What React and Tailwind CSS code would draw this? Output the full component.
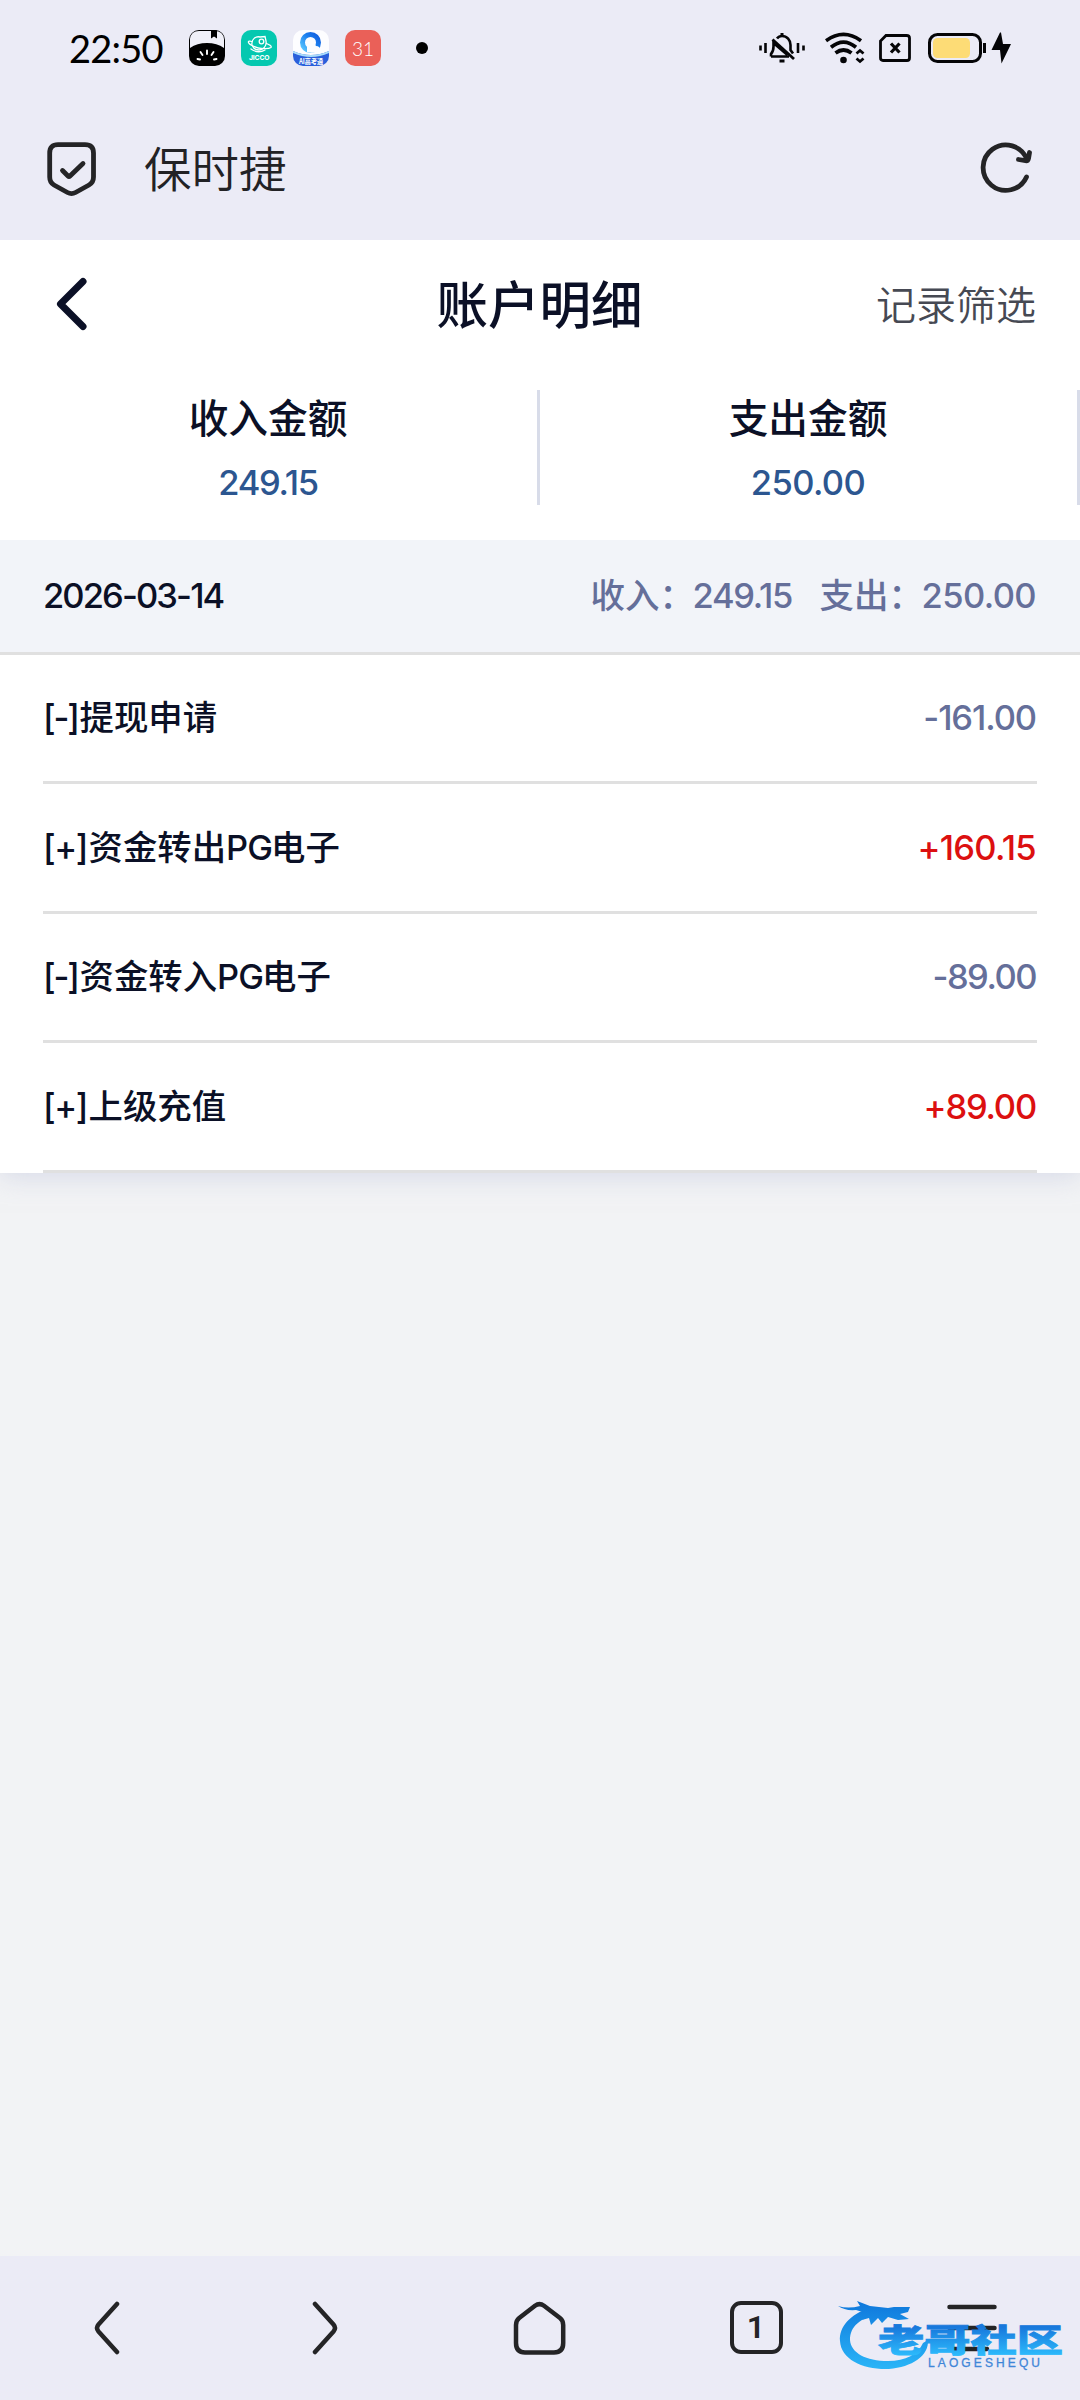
import React from "react";

const records = [
  { sign: "[-]", before: "提现申请", amount: "-161.00", income: false, track: "tracking-[-1.1px]", height: "h-[129px]" },
  { sign: "[+]", before: "资金转出", game: "PG", after: "电子", amount: "+160.15", income: true, track: "tracking-[-0.7px]", height: "h-[130px]" },
  { sign: "[-]", before: "资金转入", game: "PG", after: "电子", amount: "-89.00", income: false, track: "tracking-[-1.5px]", height: "h-[129px]" },
  { sign: "[+]", before: "上级充值", amount: "+89.00", income: true, track: "tracking-[-1.2px]", height: "h-[130px]" },
];

function BookIcon() {
  return (
    <svg width="36" height="36" viewBox="0 0 36 36">
      <clipPath id="book-clip"><rect width="36" height="36" rx="10" /></clipPath>
      <g clipPath="url(#book-clip)">
        <rect width="36" height="36" fill="#000" />
        <path d="M1 18V9Q2 1 10 1H26Q34 1 35 9V18Q28 13 18 13Q8 13 1 18Z" fill="#f0f0f8" />
        <path d="M22 0H28V8.500L25 6.500L22 8.500Z" fill="#000" />
        <g stroke="#fff" strokeWidth="1.900" strokeLinecap="round">
          <path d="M18 20.500V24M11.500 22L13.500 25M24.500 22L22.500 25M8.500 29L11 29.500M27.500 29L25 29.500" />
        </g>
      </g>
    </svg>
  );
}

function JiccoIcon() {
  return (
    <svg width="36" height="36" viewBox="0 0 36 36">
      <rect width="36" height="36" rx="10" fill="#05c8b0" />
      <g fill="none" stroke="#fff" strokeWidth="1.300" strokeLinecap="round">
        <path d="M11 15C10 9 15 6 19 7L24 6.500L25 11C26 16 22 20 18 20C15 20 12.500 18.500 11.500 16" />
        <path d="M11 11.500C6 10 6 13 12 16C18 19 27 19.500 30 17.500C31 16 28 14.500 25.500 13.500" />
        <circle cx="20.500" cy="11.500" r="2.300" />
        <path d="M10 19Q17 24 24 20" />
      </g>
      <text x="8" y="30.300" textLength="20.500" fontFamily="Inter" fontWeight="700" fontSize="6.800" fill="#fff">JICCO</text>
    </svg>
  );
}

function BrowserIcon() {
  return (
    <svg width="36" height="36" viewBox="0 0 36 36">
      <defs>
        <clipPath id="browser-clip"><rect width="36" height="36" rx="10" /></clipPath>
        <linearGradient id="browser-ring" x1="0" y1="1" x2="1" y2="0">
          <stop offset="0" stopColor="#5cc8ff" />
          <stop offset="0.600" stopColor="#1c7fee" />
          <stop offset="1" stopColor="#1560df" />
        </linearGradient>
      </defs>
      <g clipPath="url(#browser-clip)">
        <rect width="36" height="36" fill="#fdfdff" />
        <path d="M0 21Q18 29 36 21V36H0Z" fill="#2a5fdb" />
        <path d="M0 21Q18 29 36 21V23Q18 31 0 23Z" fill="#a9dcfa" />
        <circle cx="17.500" cy="12.500" r="8" fill="none" stroke="url(#browser-ring)" strokeWidth="5" />
        <path d="M14 17Q15 12 19 12.500Q22 13 23 16Q27 16 27 20Q22 24 14 22Z" fill="#fdfdff" />
        <text x="6" y="33.800" textLength="24" lengthAdjust="spacingAndGlyphs" fontFamily="'Noto Sans CJK SC'" fontWeight="700" fontSize="7" fill="#fff">AI高考通</text>
      </g>
    </svg>
  );
}

function StatusBar() {
  return (
    <div className="flex h-[96px] items-center pl-[69px] pr-[68px]">
      <span className="w-[93px] whitespace-nowrap font-['Lato'] text-[38px] leading-[40px] tracking-[-0.8px] text-black">22:50</span>
      <div className="ml-[27px] flex items-center gap-4">
        <BookIcon />
        <JiccoIcon />
        <BrowserIcon />
        <span className="flex size-9 items-center justify-center rounded-[10px] bg-[#ea6058] font-['Lato'] text-[19px] font-light leading-none text-white">31</span>
      </div>
      <span className="ml-[35px] size-3 rounded-full bg-black" />
      <div className="ml-auto flex items-center">
        <svg width="46" height="32" viewBox="0 0 46 32" fill="none" stroke="#050507">
          <path d="M1.500 13.500V18.500M6.500 11V21M39 11V21M44.500 13.500V18.500" strokeWidth="2.600" />
          <path d="M12 24.500H30M12 24.500V22C14 20 14.500 18 14.500 14.500V11L28.500 23M18 6.500C19.500 4.500 21 4 23 4C28 4 31.500 8 31.500 13V18L34 21.500" strokeWidth="2.600" />
          <path d="M13.500 7.500L35 27" strokeWidth="2.800" />
          <path d="M23 1V4M20.500 29H25.500" strokeWidth="3" />
        </svg>
        <svg className="ml-[20px]" width="40" height="32" viewBox="0 0 40 32" fill="none" stroke="#050507">
          <path d="M1 8.700Q18.500 -4 36 8.700M6 15.300Q18.500 5 31 15.300M10.500 21Q18.500 15 26.500 21" strokeWidth="3.700" />
          <circle cx="18.500" cy="28" r="3.300" fill="#050507" stroke="none" />
          <path d="M31.500 21.500L35 18.500L38.500 21.500M31.500 26.500L35 29.500L38.500 26.500" strokeWidth="2.800" />
        </svg>
        <svg className="ml-[14px]" width="32" height="30" viewBox="0 0 32 30" fill="none" stroke="#050507" strokeWidth="2.800">
          <path d="M7 2.500H27.500Q30.500 2.500 30.500 5V25Q30.500 27.500 28 27.500H4Q1.500 27.500 1.500 25V8Z" />
          <path d="M12 10.500L20.500 19.500M20.500 10.500L12 19.500" strokeWidth="3.200" />
        </svg>
        <svg className="ml-[17px]" width="59" height="32" viewBox="0 0 59 32">
          <rect x="1.500" y="2.500" width="51" height="27" rx="8" fill="none" stroke="#050507" strokeWidth="3" />
          <rect x="5" y="6" width="37" height="20" rx="4.500" fill="#fddc76" />
          <path d="M56.500 11V21" stroke="#050507" strokeWidth="3" />
        </svg>
        <svg className="ml-[4px]" width="21" height="32" viewBox="0 0 21 32">
          <path d="M9 0.500L0.500 18H9L10.500 31.500L20 12H12L10 0.500Z" fill="#050507" />
        </svg>
      </div>
    </div>
  );
}

function AddressBar() {
  return (
    <div className="flex h-[144px] items-start pl-[46px] pr-[46px] pt-[45px]">
      <svg width="50" height="56" viewBox="0 0 50 56" fill="none" stroke="#242426" strokeWidth="4.800" strokeLinecap="round" strokeLinejoin="round">
        <path d="M12 3.700H39Q47.500 3.700 47.500 12V36Q47.500 41.500 43 44L29.500 51.500Q25.500 53.700 21.500 51.500L8 44Q3.700 41.500 3.700 36V12Q3.700 3.700 12 3.700Z" />
        <path d="M16.500 29.500L22 35Q23 36 24 35L37 22.500" />
      </svg>
      <span className="ml-[48px] mt-px text-[47.500px] font-[350] leading-[56px] text-[#222225]">保时捷</span>
      <svg className="ml-auto" width="54" height="54" viewBox="0 0 54 54" fill="none" stroke="#242426" strokeWidth="4.800" strokeLinecap="round" strokeLinejoin="round">
        <path d="M46.500 36A22.700 22.700 0 1 1 47 18.500" />
        <path d="M38.500 18.500L45.500 19.700Q48 20 48.500 17.500L49.500 11.500" />
      </svg>
    </div>
  );
}

function Total({ label, value, track }) {
  return (
    <div className="flex h-[115px] w-1/2 flex-col items-center border-r-[3px] border-[#d8dce9] pr-px">
      <span className="mt-1 text-[39.700px] font-medium leading-[50px] text-[#0b1026]">{label}</span>
      <span className={`mt-[19px] text-[34.500px] font-medium leading-10 text-[#2c5690] ${track}`}>{value}</span>
    </div>
  );
}

function Record({ item }) {
  return (
    <div className={`flex items-center justify-between border-b-[3px] border-[#e0e0e0] pr-px ${item.height}`}>
      <div className="flex whitespace-nowrap text-[34.400px] font-medium leading-10 text-[#0b1026]">
        <span className={item.sign === "[+]" ? "w-[45.500px] tracking-[-1.500px]" : "w-[36.500px] tracking-[-2.200px]"}>{item.sign}</span>
        <span>{item.before}</span>
        {item.game && <span className="w-[45px] tracking-[-1px]">{item.game}</span>}
        {item.after && <span>{item.after}</span>}
      </div>
      <span className={`text-[34.500px] font-medium leading-10 ${item.track} ${item.income ? "text-[#dc1010]" : "text-[#656f9a]"}`}>{item.amount}</span>
    </div>
  );
}

function Watermark() {
  return (
    <svg className="absolute bottom-[24px] right-[16px]" width="228" height="82" viewBox="0 0 228 82">
      <defs>
        <linearGradient id="wm" gradientUnits="userSpaceOnUse" x1="0" y1="8" x2="0" y2="76">
          <stop offset="0" stopColor="#0f78dc" />
          <stop offset="1" stopColor="#2ab6f8" />
        </linearGradient>
        <linearGradient id="wm-text" x1="0" y1="0" x2="0" y2="1">
          <stop offset="0.250" stopColor="#1878dc" />
          <stop offset="0.850" stopColor="#2cb9fb" />
        </linearGradient>
      </defs>
      <g fill="url(#wm)">
        <path d="M34 14C14 20 3 33 4 47C5 66 28 76 53 75C76 73 93 62 92 46L87 49C82 60 70 67 52 67C30 67 15 59 14 46C14 32 25 24 40 21Z" />
        <path d="M2 12Q12 15 24 12L21 7L34 12L52 14L58 13L74 13L72 18L64 20L73 25L62 26L52 23L46 29L42 24L35 31L33 24L26 26L30 19L20 16Q9 17 2 12Z" />
      </g>
      <text transform="translate(42 58) scale(1 0.770)" textLength="185" lengthAdjust="spacingAndGlyphs" fontFamily="'Noto Sans CJK SC'" fontWeight="900" fontSize="41" y="0" fill="url(#wm-text)" stroke="url(#wm-text)" strokeWidth="1">老哥社区</text>
      <text x="92" y="72.500" textLength="112" fontFamily="'Liberation Sans'" fontSize="12" fill="#3f86d8" stroke="#3f86d8" strokeWidth="0.300">LAOGESHEQU</text>
    </svg>
  );
}

function BottomBar() {
  const stroke = { fill: "none", stroke: "#242426", strokeWidth: 4.5, strokeLinecap: "round", strokeLinejoin: "round" };
  return (
    <nav className="relative grid h-[144px] grid-cols-5 justify-items-center bg-[#ebebf6] pt-[44px]">
      <svg width="30" height="56" viewBox="0 0 30 56" {...stroke}>
        <path d="M24 4L5.500 24.500Q2.500 28 5.500 31.500L24 52" />
      </svg>
      <svg width="30" height="56" viewBox="0 0 30 56" {...stroke}>
        <path d="M6 4L24.500 24.500Q27.500 28 24.500 31.500L6 52" />
      </svg>
      <svg width="56" height="58" viewBox="0 0 56 58" {...stroke}>
        <path d="M23 5.800Q27.500 2.500 32 5.800L48 18Q51.200 20.500 51.200 25V43Q51.200 52.500 42 52.500H13Q4 52.500 4 43V25Q4 20.500 7.200 18Z" />
      </svg>
      <span className="mt-px flex size-[53px] items-center justify-center rounded-[11px] border-[4.500px] border-[#242426] pb-px font-['Roboto'] text-[32px] font-semibold leading-none text-[#242426]">1</span>
      <svg width="54" height="56" viewBox="0 0 54 56" {...stroke}>
        <path d="M4.500 7H49.500M4.500 28H49.500M4.500 49H42" />
      </svg>
      <Watermark />
    </nav>
  );
}

export default function App() {
  return (
    <div className="flex h-[2400px] w-[1080px] flex-col overflow-hidden bg-[#f2f3f5] font-[Inter,'Noto_Sans_CJK_SC',sans-serif]">
      <header className="relative z-10 h-[240px] shrink-0 bg-[#ebebf6]">
        <StatusBar />
        <AddressBar />
      </header>
      <main className="bg-white shadow-[0_4px_24px_rgba(190,195,220,0.5)]">
        <div className="grid h-[150px] grid-cols-[1fr_auto_1fr] items-center px-[44px] pb-[21px]">
          <svg className="ml-[9px]" width="38" height="56" viewBox="0 0 38 56" fill="none" stroke="#0b1026" strokeWidth="7" strokeLinecap="round" strokeLinejoin="round">
            <path d="M30 4.500L7.500 27L30 49.500" />
          </svg>
          <h1 className="-ml-px text-[51.500px] font-medium leading-[60px] text-[#0b1026]">账户明细</h1>
          <span className="mt-[2px] justify-self-end text-[40px] font-[350] leading-[50px] text-[#464953]">记录筛选</span>
        </div>
        <div className="flex h-[150px]">
          <Total label="收入金额" value="249.15" track="tracking-[-1.3px]" />
          <Total label="支出金额" value="250.00" track="tracking-[-0.6px]" />
        </div>
        <div className="flex h-[115px] items-center justify-between border-b-[3px] border-[#e0e0e0] bg-[#f2f4f9] px-[43px] text-[34.500px] font-medium leading-10">
          <span className="tracking-[-1.900px] text-[#0b1026]">2026-03-14</span>
          <div className="flex whitespace-nowrap pr-px text-[#656f9a]">
            <span className="w-[102px]">收入：</span>
            <span className="w-[127px] tracking-[-1.300px]">249.15</span>
            <span className="w-[102px]">支出：</span>
            <span className="tracking-[-0.600px]">250.00</span>
          </div>
        </div>
        <section className="px-[43px]">
          {records.map((item) => (
            <Record key={item.before} item={item} />
          ))}
        </section>
      </main>
      <div className="grow" />
      <BottomBar />
    </div>
  );
}
